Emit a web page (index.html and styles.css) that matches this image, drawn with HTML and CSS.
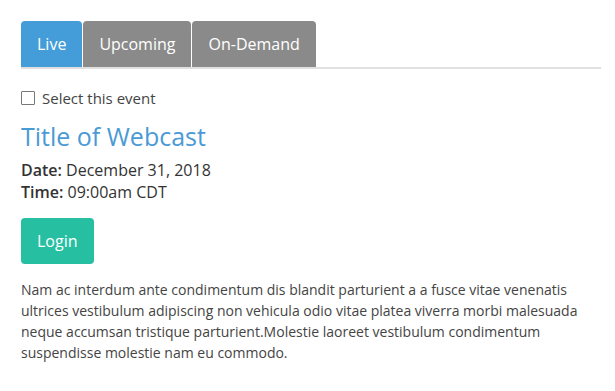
FILE: index.html
```html
<!DOCTYPE html>
<html>
<head>
<meta charset="utf-8">
<link rel="stylesheet" href="styles.css">
</head>
<body>
<div class="page">
  <ul class="tabs">
    <li class="tab active">Live</li>
    <li class="tab">Upcoming</li>
    <li class="tab">On-Demand</li>
  </ul>
  <label class="select"><span class="box"></span>Select this event</label>
  <h2 class="title">Title of Webcast</h2>
  <div class="meta"><b>Date:</b> December 31, 2018</div>
  <div class="meta"><b>Time:</b> 09:00am CDT</div>
  <button class="login">Login</button>
  <p class="desc">Nam ac interdum ante condimentum dis blandit parturient a a fusce vitae venenatis ultrices vestibulum adipiscing non vehicula odio vitae platea viverra morbi malesuada neque accumsan tristique parturient.Molestie laoreet vestibulum condimentum suspendisse molestie nam eu commodo.</p>
</div>
</body>
</html>
```
FILE: styles.css
```css
html, body { margin: 0; padding: 0; background: #fff; }
body { font-family: "Open Sans", "Liberation Sans", sans-serif; color: #333; }
.page { padding: 21px 14px 0 21px; }
.tabs {
  list-style: none; margin: 0; padding: 0;
  display: flex; gap: 1px;
  border-bottom: 2px solid #e0e0e0;
}
.tab {
  background: #8a8a8a; color: #fff;
  font-size: 16px; line-height: 22px;
  padding: 12px 16px;
  border-radius: 4px 4px 0 0;
}
.tab.active { background: #449dd9; }
.select {
  display: flex; align-items: center; gap: 7px;
  margin-top: 19px;
  font-size: 15px; line-height: 20px; color: #444;
}
.box {
  width: 12px; height: 12px; border: 1px solid #777; border-radius: 1px; background: #fff;
}
.title {
  margin: 11px 0 6px; font-weight: 400; font-size: 25px; line-height: 34px; color: #4a9ad6;
}
.meta { font-size: 16px; line-height: 22px; color: #333; }
.meta b { font-weight: 600; }
.login {
  display: block; margin-top: 15px; height: 46px;
  background: #26bfa1; color: #fff; border: 0; border-radius: 4px;
  font-family: inherit; font-size: 16px; line-height: 22px;
  padding: 12px 16px;
}
.desc { margin: 15px 0 0; font-size: 14px; line-height: 21px; color: #444; }
```
